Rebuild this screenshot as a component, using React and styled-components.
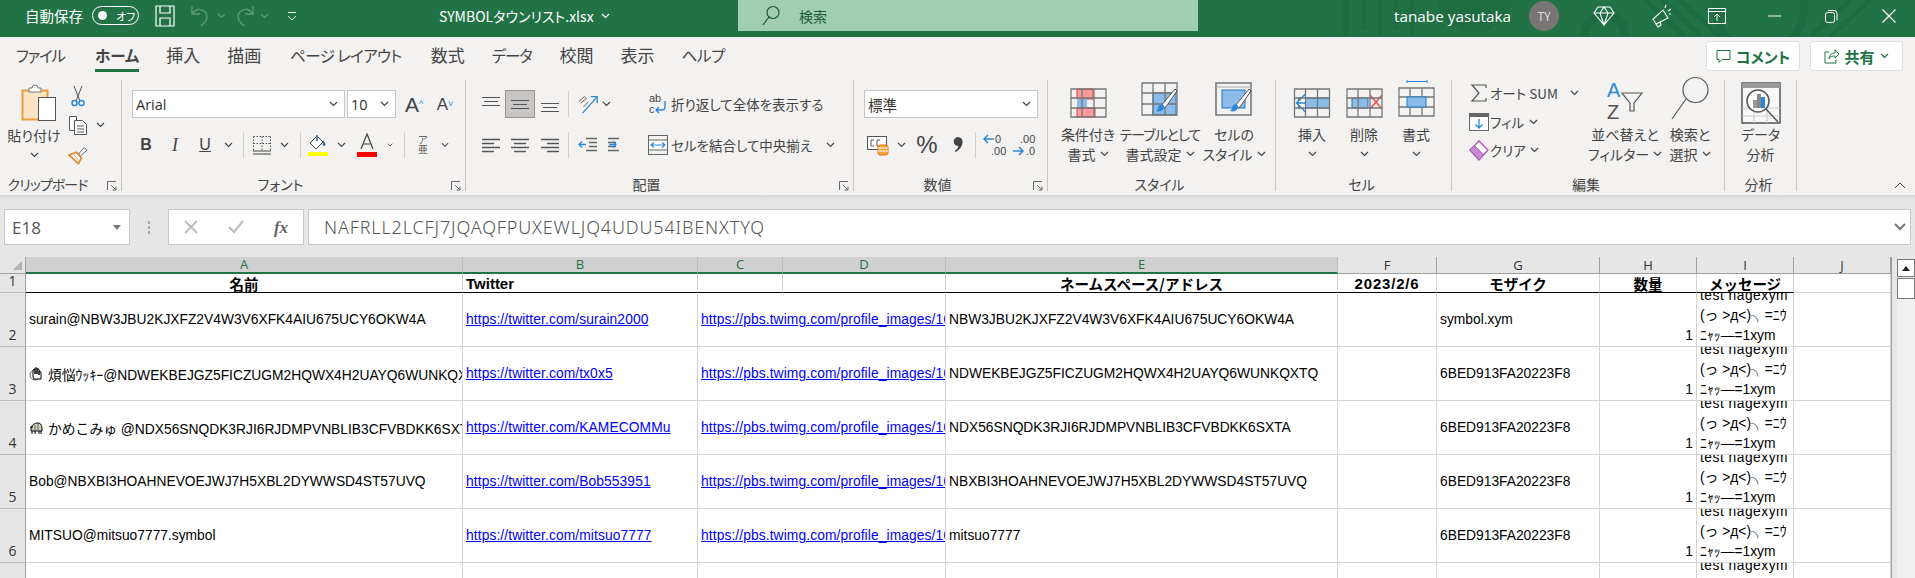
import React from 'react'
import styled, { createGlobalStyle } from 'styled-components'

const uiFont = '"Noto Sans CJK JP", "Noto Sans", sans-serif'
const gridFont = '"Liberation Sans", "Noto Sans CJK JP", sans-serif'

const Global = createGlobalStyle`
  html, body { margin: 0; padding: 0; height: 578px; overflow: hidden; background: #e6e6e6; }
  * { box-sizing: border-box; }
  #root { height: 578px; overflow: hidden; font-family: ${uiFont}; font-feature-settings: "palt"; color: #444; }
`

/* ---------- title bar ---------- */
const TitleBar = styled.header`
  position: relative;
  display: flex;
  height: 37px;
  background: #217346;
  color: #fff;
  overflow: hidden;
`
const Pattern = styled.svg`
  position: absolute;
  right: 0;
  top: 0;
`
const TitleLeft = styled.div`
  position: relative;
  display: flex;
  align-items: center;
  width: 738px;
  height: 31px;
  padding-left: 25px;
  font-size: 14.5px;
`
const AutoSave = styled.span`
  width: 67px;
`
const Toggle = styled.span`
  display: flex;
  align-items: center;
  width: 47px;
  height: 19px;
  margin-right: 16px;
  padding-left: 5px;
  gap: 9px;
  border: 1px solid #fff;
  border-radius: 10px;
  font-size: 11px;
  &::before {
    content: '';
    width: 9px;
    height: 9px;
    border-radius: 50%;
    background: #fff;
  }
`
const Slot = styled.span`
  display: inline-flex;
  flex: none;
  align-items: center;
  justify-content: center;
  width: ${p => p.$w}px;
  margin-left: ${p => p.$ml || 0}px;
  height: 100%;
  ${p => p.$active ? 'background: #c8c6c4; border: 1px solid #979593;' : ''}
`
const FileName = styled.span`
  display: flex;
  align-items: center;
  gap: 7px;
  margin-left: 142px;
  font-size: 14px;
`
const SearchBox = styled.div`
  position: relative;
  display: flex;
  align-items: center;
  width: 460px;
  height: 31px;
  padding-left: 24px;
  gap: 19px;
  background: #a0cdb3;
  color: #1c5a37;
  font-size: 14px;
`
const TitleRight = styled.div`
  position: relative;
  display: flex;
  align-items: center;
  flex: 1;
  height: 31px;
  padding-left: 196px;
`
const UserName = styled.span`
  width: 135px;
  font-size: 15.3px;
  font-family: "Open Sans", sans-serif;
  white-space: nowrap;
`
const Avatar = styled.span`
  display: flex;
  align-items: center;
  justify-content: center;
  width: 30px;
  height: 30px;
  margin-right: 20px;
  border-radius: 50%;
  background: #7a7574;
  color: #ddd;
  font-size: 12px;
`

/* ---------- tabs ---------- */
const TabRow = styled.nav`
  display: flex;
  align-items: flex-start;
  height: 41px;
  padding-left: 16px;
  background: #f3f2f1;
`
const Tab = styled.span`
  height: 35px;
  margin-right: ${p => p.$gap}px;
  padding-top: 6px;
  font-size: ${p => p.$kanji ? 17 : 15.5}px;
  letter-spacing: ${p => p.$ls || 0}px;
  line-height: 24px;
  white-space: nowrap;
  ${p => p.$active ? 'font-weight: 700; border-bottom: 3px solid #217346;' : ''}
`
const TopActions = styled.div`
  display: flex;
  gap: 10px;
  margin-left: auto;
  padding: 4px 12px 0 0;
`
const TopButton = styled.button`
  display: flex;
  align-items: center;
  justify-content: center;
  gap: 5px;
  width: ${p => p.$w}px;
  height: 30px;
  padding: 0;
  background: #fff;
  border: 1px solid #e1dfdd;
  border-radius: 3px;
  color: #217346;
  font: 700 15px ${uiFont};
  font-feature-settings: "palt";
`

/* ---------- ribbon ---------- */
const Ribbon = styled.section`
  display: flex;
  height: 117px;
  padding: 2px 0 4px;
  background: #f3f2f1;
`
const Group = styled.div`
  display: flex;
  flex-direction: column;
  flex: none;
  width: ${p => p.$w}px;
  border-right: 1px solid #c8c6c4;
`
const GroupBody = styled.div`
  display: flex;
  flex: 1;
  padding: ${p => p.$pt ?? 8}px 0 0 ${p => p.$pl || 0}px;
`
const GroupLabel = styled.div`
  display: grid;
  grid-template-columns: 1fr auto;
  align-items: start;
  height: 24px;
  padding: 8px 4px 0 0;
  font-size: 14px;
  line-height: 18px;
  letter-spacing: ${p => p.$ls || 0}px;
  & > span { text-align: center; }
  & > svg { margin: 6px 0 0 12px; }
`
const Column = styled.div`
  display: flex;
  flex-direction: column;
  flex: none;
  width: ${p => p.$w}px;
  ${p => p.$pl ? `padding-left: ${p.$pl}px;` : ''}
`
const Big = styled.div`
  display: flex;
  flex-direction: column;
  align-items: center;
  flex: none;
  width: ${p => p.$w}px;
  font-size: 14px;
  line-height: 20px;
  white-space: nowrap;
`
const BigIcon = styled.div`
  display: flex;
  align-items: flex-end;
  justify-content: center;
  height: ${p => p.$h || 30}px;
  margin-bottom: ${p => p.$mb ?? 6}px;
  margin-left: ${p => p.$ml || 0}px;
`
const TextLine = styled.span`
  display: flex;
  align-items: center;
  justify-content: center;
  gap: 4px;
  height: 20px;
  letter-spacing: ${p => p.$ls || 0}px;
`
const ToolRow = styled.div`
  display: flex;
  align-items: center;
  height: ${p => p.$h}px;
  margin-top: ${p => p.$mt || 0}px;
  font-size: 13.5px;
  white-space: nowrap;
`
const Divider = styled.span`
  flex: none;
  width: 1px;
  height: 26px;
  margin: 0 ${p => p.$mr || 0}px 0 ${p => p.$ml || 0}px;
  background: #d2d0ce;
`
const SelectBox = styled.div`
  display: flex;
  align-items: center;
  justify-content: space-between;
  flex: none;
  width: ${p => p.$w}px;
  height: 28px;
  margin-right: ${p => p.$mr || 0}px;
  padding: 0 6px 0 3px;
  background: #fff;
  border: 1px solid #c8c6c4;
  color: #333;
  font-size: 14.5px;
  font-family: ${p => p.$arial ? '"Open Sans", sans-serif' : uiFont};
`
const Glyph = styled.span`
  color: ${p => p.$color || '#444'};
  font-family: ${p => p.$serif ? '"Liberation Serif", serif' : '"Liberation Sans", sans-serif'};
  font-size: ${p => p.$size || 16}px;
  font-weight: ${p => p.$bold ? 700 : 400};
  font-style: ${p => p.$italic ? 'italic' : 'normal'};
  text-decoration: ${p => p.$under ? 'underline' : 'none'};
  line-height: 1;
`
const Spacer = styled.div`
  display: flex;
  flex: 1;
  align-items: flex-end;
  justify-content: flex-end;
  padding: 0 9px 2px 0;
`

/* ---------- formula bar ---------- */
const FormulaBar = styled.div`
  display: flex;
  height: 62px;
  padding: 14px 4px 12px;
  background: linear-gradient(#d6d6d6, #e6e6e6 6px);
`
const NameBox = styled.div`
  display: flex;
  align-items: center;
  justify-content: space-between;
  width: 126px;
  padding: 0 8px 0 7px;
  background: #fff;
  border: 1px solid #c8c8c8;
  font: 17px "Open Sans", sans-serif;
  color: #555;
`
const Grip = styled.span`
  display: flex;
  flex-direction: column;
  align-items: center;
  justify-content: center;
  gap: 2px;
  width: 38px;
  & > i { width: 2px; height: 3px; background: #aaa; }
`
const FxBox = styled.div`
  display: flex;
  align-items: center;
  width: 136px;
  margin-right: 4px;
  padding-left: 0;
  background: #fff;
  border: 1px solid #c8c8c8;
`
const FormulaInput = styled.div`
  display: flex;
  align-items: center;
  justify-content: space-between;
  flex: 1;
  padding: 0 4px 0 15px;
  background: #fff;
  border: 1px solid #c8c8c8;
  color: #555;
  font: 300 18px "Noto Sans", sans-serif;
  letter-spacing: .85px;
`

/* ---------- sheet ---------- */
const SheetArea = styled.div`
  display: flex;
  height: 321px;
  background: #e6e6e6;
  overflow: hidden;
`
const Grid = styled.div`
  display: grid;
  flex: none;
  grid-template-columns: 26px 437px 235px 85px 163px 392px 99px 163px 97px 97px 97px;
  grid-template-rows: 17px 19px repeat(6, 54px);
  width: 1892px;
  border-right: 1px solid #9f9f9f;
  font: 13.8px ${gridFont};
  font-feature-settings: normal;
  color: #000;
`
const Corner = styled.div`
  position: relative;
  background: #e6e6e6;
  border-right: 1px solid #9f9f9f;
  border-bottom: 1px solid #9f9f9f;
  &::after {
    content: '';
    position: absolute;
    right: 3px;
    bottom: 3px;
    border-style: solid;
    border-width: 0 0 9px 9px;
    border-color: transparent transparent #b4b4b4 transparent;
  }
`
const ColHead = styled.div`
  display: flex;
  align-items: center;
  justify-content: center;
  background: ${p => p.$on ? '#d0d0d0' : '#e6e6e6'};
  border-right: 1px solid ${p => p.$on ? '#bdbdbd' : '#9f9f9f'};
  border-bottom: ${p => p.$on ? '2px solid #217346' : '1px solid #9f9f9f'};
  color: ${p => p.$on ? '#217346' : '#333'};
  font: 13px/15px "Open Sans", sans-serif;
`
const RowHead = styled.div`
  display: flex;
  align-items: flex-end;
  justify-content: center;
  padding-bottom: 2px;
  background: #e6e6e6;
  border-right: 1px solid #9f9f9f;
  border-bottom: 1px solid #bdbdbd;
  color: #333;
  font: 14px/18px "Open Sans", sans-serif;
`
const Cell = styled.div`
  display: flex;
  align-items: ${p => p.$valign || 'center'};
  justify-content: ${p => p.$justify || 'flex-start'};
  grid-column: span ${p => p.$span || 1};
  min-width: 0;
  padding: 0 3px;
  background: #fff;
  border-right: 1px solid #d4d4d4;
  border-bottom: 1px solid #d4d4d4;
  white-space: nowrap;
  overflow: hidden;
`
const HeadCell = styled(Cell)`
  justify-content: ${p => p.$left ? 'flex-start' : 'center'};
  border-bottom: 1px solid ${p => p.$plain ? '#d4d4d4' : '#000'};
  font-size: ${p => p.$ja ? 14.5 : 15}px;
  font-weight: 700;
  line-height: 17px;
  letter-spacing: ${p => p.$wide ? .8 : 0}px;
  ${p => p.$ja ? `font-family: ${uiFont};` : ''}
`
const Link = styled.a`
  color: #00f;
  text-decoration: underline;
  letter-spacing: .1px;
`
const Lines = styled.div`
  flex: none;
  line-height: 20px;
`
const WideLine = styled.div`
  letter-spacing: .5px;
`
const Scrollbar = styled.div`
  display: flex;
  flex-direction: column;
  flex: none;
  width: 18px;
  margin: 2px 0 0 5px;
  background: #f0f0f0;
`
const ScrollButton = styled.div`
  display: flex;
  align-items: center;
  justify-content: center;
  height: 18px;
  background: #fff;
  border: 1px solid #777;
  &::before {
    content: '';
    border-style: solid;
    border-width: 0 4px 5px 4px;
    border-color: transparent transparent #222 transparent;
  }
`
const ScrollThumb = styled.div`
  height: 21px;
  margin-top: 1px;
  background: #fff;
  border: 1px solid #777;
`

/* ---------- icons ---------- */
const Chevron = ({ color = '#444' }) => (
  <svg width="9" height="6" viewBox="0 0 9 6"><path d="M1 1l3.5 3.5L8 1" fill="none" stroke={color} strokeWidth="1.2" /></svg>
)
const Launcher = () => (
  <svg width="10" height="10" viewBox="0 0 10 10" fill="none" stroke="#666"><path d="M.5 9V.5H9M4 4l5 5M9 5.500V9H5.500" /></svg>
)
const Line = ({ children, w = 20, h = 20 }) => (
  <svg width={w} height={h} viewBox={`0 0 ${w} ${h}`} fill="none" stroke="#555" strokeWidth="1">{children}</svg>
)
const AlignV = ({ pos }) => {
  const y = { top: 3, mid: 6, bot: 9 }[pos]
  return (
    <Line><path d={`M1 ${y}.5h18M3 ${y + 4}.5h14M1 ${y + 8}.5h18`} strokeWidth="1.2" /></Line>
  )
}
const AlignH = ({ pos }) => {
  const paths = {
    left: 'M1 2.500h18M1 6.500h12M1 10.500h18M1 14.500h12',
    center: 'M1 2.500h18M4 6.500h12M1 10.500h18M4 14.500h12',
    right: 'M1 2.500h18M7 6.500h12M1 10.500h18M7 14.500h12',
  }
  return <Line h={17}><path d={paths[pos]} strokeWidth="1.3" /></Line>
}
const Indent = ({ right }) => (
  <Line w={19} h={18}>
    <path d="M8 2.500h11M11 6.500h8M11 10.500h8M8 14.500h11" stroke="#666" transform={right ? 'matrix(-1 0 0 1 19 0)' : undefined} strokeWidth="1.3" />
    <path d={right ? 'M1 8.500h7M5 5.500l3 3-3 3' : 'M8 8.500H1M4 5.500l-3 3 3 3'} stroke="#2b88d8" strokeWidth="1.3" />
  </Line>
)
const PasteIcon = () => (
  <svg width="36" height="37" viewBox="0 0 36 37">
    <rect x="1.500" y="6.500" width="25" height="29" fill="#fbe3c3" stroke="#ed9b3f" strokeWidth="2" />
    <path d="M8 6V4h3a3 3 0 016 0h3v4H8z" fill="#fff" stroke="#777" />
    <rect x="17.500" y="13.500" width="17" height="23" fill="#fff" stroke="#555" />
  </svg>
)
const Scissors = () => (
  <svg width="14" height="22" viewBox="0 0 14 22" fill="none">
    <path d="M3 1l6 15M11 1L5 16" stroke="#555" />
    <circle cx="3.500" cy="18" r="2.500" stroke="#2b88d8" strokeWidth="1.5" />
    <circle cx="10.500" cy="18" r="2.500" stroke="#2b88d8" strokeWidth="1.5" />
  </svg>
)
const CopyIcon = () => (
  <svg width="20" height="20" viewBox="0 0 20 20" fill="#fff" stroke="#555">
    <path d="M1.500 1.500h7v14h-7z" />
    <path d="M6.500 5.500h8l4 4v10h-12z" />
    <path d="M9 11h7M9 14h7M9 17h7" />
  </svg>
)
const BrushIcon = () => (
  <svg width="21" height="20" viewBox="0 0 21 20">
    <path d="M1 10l8-3 5 6-3 6z" fill="#fff" stroke="#e8862a" strokeWidth="1.800" />
    <path d="M4 12l5 5M6 10l5 5" stroke="#e8862a" />
    <path d="M11 9l6-7 3 3-7 6z" fill="#f4f4f4" stroke="#666" />
  </svg>
)
const BordersIcon = () => (
  <Line h={21}>
    <path d="M1.500 1.500h17M1.500 1.500v14M18.500 1.500v14M10 1.500v14M1.500 8.500h17" strokeDasharray="1.500 1.500" />
    <path d="M1 16h18M1 19h18" stroke="#444" strokeWidth="1.2" />
  </Line>
)
const FillIcon = () => (
  <svg width="20" height="22" viewBox="0 0 20 22">
    <path d="M9 2L2 9l6 6 7-7z" fill="#fff" stroke="#444" />
    <path d="M9 1v6" stroke="#2b6cb0" strokeWidth="1.500" />
    <path d="M15 6c2 3 2.500 4 2.500 5a2 2 0 01-3 0z" fill="#2b6cb0" />
    <rect y="18" width="20" height="4" fill="#ff0" />
  </svg>
)
const FontColor = () => (
  <svg width="20" height="24" viewBox="0 0 20 24">
    <path d="M4 16L10 1l6 15M6 11h8" fill="none" stroke="#444" strokeWidth="1.200" />
    <rect y="19" width="20" height="5" fill="#f00" />
  </svg>
)
const OrientIcon = () => (
  <svg width="24" height="22" viewBox="0 0 24 22" fill="none">
    <path d="M5 21L20 4M14 3h7v7" stroke="#2b88d8" strokeWidth="1.400" />
    <path d="M1 8l6-5 2 2-6 5M6 14l5-5" stroke="#555" />
  </svg>
)
const WrapIcon = () => (
  <svg width="19" height="22" viewBox="0 0 19 22">
    <text x="1" y="9" fontSize="11" fill="#444" fontFamily="Liberation Sans">ab</text>
    <text x="1" y="20" fontSize="11" fill="#444" fontFamily="Liberation Sans">c</text>
    <path d="M17 8v6a3 3 0 01-3 3H8M11 14l-3 3 3 3" fill="none" stroke="#2b88d8" strokeWidth="1.400" />
  </svg>
)
const MergeIcon = () => (
  <svg width="20" height="20" viewBox="0 0 20 20" fill="none">
    <rect x=".5" y=".5" width="19" height="19" stroke="#666" />
    <path d="M1 5h18M1 15h18" stroke="#666" />
    <rect x="1" y="6" width="18" height="8" fill="#fff" />
    <path d="M3 10h14M6 7.500L3 10l3 2.500M14 7.500l3 2.500-3 2.500" stroke="#2b88d8" strokeWidth="1.200" />
  </svg>
)
const CurrencyIcon = () => (
  <svg width="22" height="22" viewBox="0 0 22 22">
    <rect x=".5" y="2.500" width="19" height="13" fill="#fff" stroke="#555" />
    <path d="M7 6H4v6h3M13 6h-3v6h3" fill="none" stroke="#555" />
    <rect x="11" y="11" width="10" height="10" rx="2" fill="#f2a13c" stroke="#e27a1a" />
    <path d="M11 14h10M11 17h10" stroke="#fff" />
  </svg>
)
const CommaIcon = () => (
  <svg width="10" height="16" viewBox="0 0 10 16"><path d="M5 0a4.500 4.500 0 014.500 5c0 4-3 8-7 10l-.7-.9C4 12.500 5.200 10.500 5.400 9A4.500 4.500 0 015 0z" fill="#444" /></svg>
)
const DecimalIcon = ({ more }) => (
  <svg width="24" height="24" viewBox="0 0 24 24">
    <text x={more ? 8 : 12} y="10" fontSize="11" fill="#444" fontFamily="Liberation Sans">{more ? '.00' : '0'}</text>
    <text x={more ? 14 : 8} y="22" fontSize="11" fill="#444" fontFamily="Liberation Sans">{more ? '.0' : '.00'}</text>
    <path d={more ? 'M1 18h9M7 14l4 4-4 4' : 'M11 6H2M5 2L1 6l4 4'} fill="none" stroke="#2b88d8" strokeWidth="1.500" />
  </svg>
)
const TableBase = ({ children, w = 37, h = 30 }) => (
  <svg width={w} height={h} viewBox="0 0 37 30" fill="none">
    {children}
    <path d="M1 1h35v28H1zM1 10h35M1 20h35M12 1v28M24 1v28" stroke="#777" strokeWidth="1.300" />
  </svg>
)
const CondIcon = () => (
  <TableBase>
    <rect x="7" y="1" width="16" height="10" fill="#ff9a9a" stroke="#e03c3c" />
    <rect x="7" y="11" width="10" height="9" fill="#8bbbe8" />
    <rect x="7" y="20" width="18" height="9" fill="#ff9a9a" stroke="#e03c3c" />
  </TableBase>
)
const Paint = () => (
  <>
    <path d="M20 24L34 7l2 2-12 17z" fill="#fff" stroke="#555" />
    <path d="M18 23c3-2 6 0 5 3s-5 4-8 3c2-1 2-4 3-6z" fill="#2b88d8" />
  </>
)
const TableFormatIcon = () => (
  <svg width="38" height="36" viewBox="0 0 38 36" fill="none">
    <rect x="12" y="11" width="23" height="22" fill="#8bbbe8" stroke="#1f77c4" />
    <path d="M1 1h35v32H1zM1 11h35M1 22h35M12 1v32M24 1v32" stroke="#777" strokeWidth="1.300" />
    <Paint />
  </svg>
)
const CellStyleIcon = () => (
  <svg width="38" height="36" viewBox="0 0 38 36" fill="none">
    <path d="M1 1h35v32H1z" stroke="#777" strokeWidth="1.600" />
    <path d="M1 5h35" stroke="#aaa" />
    <rect x="7" y="8" width="23" height="18" fill="#8bbbe8" stroke="#1f77c4" />
    <Paint />
  </svg>
)
const InsertIcon = () => (
  <TableBase w={38}>
    <rect x="5" y="10" width="31" height="10" fill="#8bbbe8" stroke="#1f77c4" />
    <path d="M12 6l-9 9 9 9M3 15h9" stroke="#2b88d8" strokeWidth="1.500" fill="#fff" />
  </TableBase>
)
const DeleteIcon = () => (
  <TableBase>
    <rect x="6" y="10" width="16" height="10" fill="#8bbbe8" stroke="#1f77c4" />
    <path d="M24 7l12 14M36 7L24 21" stroke="#f04b4b" strokeWidth="1.500" />
  </TableBase>
)
const FormatIcon = () => (
  <svg width="37" height="38" viewBox="0 0 37 38" fill="none">
    <path d="M9 1.500h20M9 0v3M29 0v3" stroke="#2b88d8" />
    <path d="M1 8h35v28H1zM1 17h35M1 27h35M12 8v28M24 8v28" stroke="#777" strokeWidth="1.300" />
    <rect x="9" y="17" width="19" height="10" fill="#8bbbe8" stroke="#1f77c4" />
  </svg>
)
const SigmaIcon = () => (
  <svg width="18" height="19" viewBox="0 0 18 19" fill="none"><path d="M16 4V1H2l7 8-7 8h14v-3" stroke="#555" strokeWidth="1.200" /></svg>
)
const FillDownIcon = () => (
  <svg width="20" height="18" viewBox="0 0 20 18" fill="none">
    <rect x=".5" y=".5" width="19" height="17" fill="#fff" stroke="#666" />
    <path d="M1 2.500h18" stroke="#666" strokeWidth="3" />
    <path d="M10 6v9M6.500 11.500L10 15l3.500-3.500" stroke="#2b88d8" strokeWidth="1.300" />
  </svg>
)
const EraserIcon = () => (
  <svg width="20" height="21" viewBox="0 0 20 21">
    <path d="M10 1l9 9-9 10-9-10z" fill="#fff" stroke="#a94fb5" strokeWidth="1.300" />
    <path d="M5.500 5.500l9 9.500L10 20l-9-10z" fill="#c78ccf" stroke="#a94fb5" />
  </svg>
)
const SortIcon = () => (
  <svg width="36" height="42" viewBox="0 0 36 42" fill="none">
    <text x="0" y="18" fontSize="20" fill="#2b88d8" fontFamily="Liberation Sans">A</text>
    <text x="0" y="40" fontSize="20" fill="#555" fontFamily="Liberation Sans">Z</text>
    <path d="M15 14h20l-8 10v8h-4v-8z" stroke="#555" strokeWidth="1.200" />
  </svg>
)
const FindIcon = () => (
  <svg width="38" height="45" viewBox="0 0 38 45" fill="none" stroke="#555" strokeWidth="1.200">
    <circle cx="24.500" cy="14" r="12.500" />
    <path d="M15 23L1 43" />
  </svg>
)
const AnalyzeIcon = () => (
  <svg width="40" height="42" viewBox="0 0 40 42" fill="none">
    <rect x="1" y="1" width="38" height="40" fill="#f8f8f8" stroke="#555" strokeWidth="1.500" />
    <rect x="1" y="1" width="38" height="5" fill="#999" />
    <path d="M1 26h38M1 34h38M13 26v15M26 26v15" stroke="#ccc" />
    <circle cx="17" cy="19" r="11" fill="#fff" stroke="#555" strokeWidth="1.500" />
    <path d="M25 27l12 13" stroke="#555" strokeWidth="1.500" />
    <rect x="12" y="18" width="4" height="8" fill="#999" />
    <rect x="16" y="12" width="4" height="14" fill="#888" />
    <rect x="20" y="15" width="4" height="11" fill="#2b88d8" />
  </svg>
)
const EmojiSvg = styled.svg`
  flex: none;
  margin-right: 4px;
`
const RowEmoji = ({ kind }) => (
  <EmojiSvg width="15" height="15" viewBox="0 0 15 15" fill="none">
    {kind === 'hand'
      ? <><circle cx="6" cy="9" r="5" stroke="#666" /><path d="M4 11V4l2-1v5-6l2 0v6-5l2 0v6-4l2 1v7H5z" fill="#fff" stroke="#000" /></>
      : <><path d="M2 9c0-4 4-6 7-6s4 3 4 6v2H2z" fill="#d9c89e" stroke="#000" /><path d="M3 11v3M6 11v3M10 11v3M12 11v3M1 7h3" stroke="#000" /><path d="M6 5v6M9 4v7" stroke="#3a7ab0" /></>}
  </EmojiSvg>
)

/* ---------- data ---------- */
const columns = ['A', 'B', 'C', 'D', 'E', 'F', 'G', 'H', 'I', 'J']
const twimg = 'https://pbs.twimg.com/profile_images/1620000000000000000/a.jpg'
const rows = [
  { n: 2, name: 'surain@NBW3JBU2KJXFZ2V4W3V6XFK4AIU675UCY6OKW4A', tw: 'surain2000', addr: 'NBW3JBU2KJXFZ2V4W3V6XFK4AIU675UCY6OKW4A', mosaic: 'symbol.xym' },
  { n: 3, icon: 'hand', name: '煩悩ｳｯｷｰ@NDWEKBEJGZ5FICZUGM2HQWX4H2UAYQ6WUNKQXTQ', tw: 'tx0x5', addr: 'NDWEKBEJGZ5FICZUGM2HQWX4H2UAYQ6WUNKQXTQ', mosaic: '6BED913FA20223F8' },
  { n: 4, icon: 'turtle', name: 'かめこみゅ @NDX56SNQDK3RJI6RJDMPVNBLIB3CFVBDKK6SXTA', tw: 'KAMECOMMu', addr: 'NDX56SNQDK3RJI6RJDMPVNBLIB3CFVBDKK6SXTA', mosaic: '6BED913FA20223F8' },
  { n: 5, name: 'Bob@NBXBI3HOAHNEVOEJWJ7H5XBL2DYWWSD4ST57UVQ', tw: 'Bob553951', addr: 'NBXBI3HOAHNEVOEJWJ7H5XBL2DYWWSD4ST57UVQ', mosaic: '6BED913FA20223F8' },
  { n: 6, name: 'MITSUO@mitsuo7777.symbol', tw: 'mitsuo7777', addr: 'mitsuo7777', mosaic: '6BED913FA20223F8' },
]

const Message = () => (
  <Lines>
    <WideLine>test nagexym</WideLine>
    <div>(っ &gt;д&lt;)╮=ﾆｳ</div>
    <div>ﾆｬｯ―=1xym</div>
  </Lines>
)

export default function App() {
  return (
    <>
      <Global />
      <TitleBar>
        <Pattern width="575" height="37" viewBox="0 0 575 37" fill="none" stroke="#000" strokeOpacity=".07">
          <path d="M6 0v37M24 0v30M40 0v37M56 0v30M72 0v37" strokeWidth="5" />
          <circle cx="135" cy="-5" r="38" fill="#000" fillOpacity=".06" stroke="none" />
          <circle cx="265" cy="35" r="20" strokeWidth="9" />
          <path d="M305 0l40 37M322 0l40 37M340 0l40 37M470 37L510 0M490 37L530 0" strokeWidth="5" />
          <circle cx="420" cy="8" r="44" strokeWidth="8" />
        </Pattern>
        <TitleLeft>
          <AutoSave>自動保存</AutoSave>
          <Toggle>オフ</Toggle>
          <Slot $w={20}>
            <svg width="20" height="22" viewBox="0 0 20 22" fill="none" stroke="#fff" strokeWidth="1.200">
              <path d="M1 1h18v20H1zM5 1v7h10V1M5 21v-8h10v8" />
            </svg>
          </Slot>
          <Slot $w={20} $ml={15}>
            <svg width="20" height="24" viewBox="0 0 20 24" fill="none" stroke="#5f9a78" strokeWidth="1.300"><path d="M2 2v8h8M2 10c3-5 8-6 12-3 4 3 4 8 0 12l-3 3" /></svg>
          </Slot>
          <Slot $w={11} $ml={6}><Chevron color="#5f9a78" /></Slot>
          <Slot $w={20} $ml={8}>
            <svg width="20" height="24" viewBox="0 0 20 24" fill="none" stroke="#5f9a78" strokeWidth="1.300"><path d="M18 2v8h-8M18 10c-3-5-8-6-12-3-4 3-4 8 0 12l3 3" /></svg>
          </Slot>
          <Slot $w={11} $ml={4}><Chevron color="#5f9a78" /></Slot>
          <Slot $w={10} $ml={17}>
            <svg width="10" height="10" viewBox="0 0 10 10" fill="none" stroke="#fff"><path d="M1 1.500h8M1 5l4 4 4-4" /></svg>
          </Slot>
          <FileName>
            SYMBOLタウンリスト.xlsx
            <Chevron color="#fff" />
          </FileName>
        </TitleLeft>
        <SearchBox>
          <svg width="18" height="21" viewBox="0 0 18 21" fill="none" stroke="#1c5a37" strokeWidth="1.200">
            <circle cx="11" cy="7.500" r="6" /><path d="M7 12l-6 8" />
          </svg>
          検索
        </SearchBox>
        <TitleRight>
          <UserName>tanabe yasutaka</UserName>
          <Avatar>TY</Avatar>
          <Slot $w={44} $ml={3}>
            <svg width="22" height="22" viewBox="0 0 22 22" fill="none" stroke="#fff" strokeWidth="1.100"><path d="M5 2h12l4 6-10 12L1 8zM1 8h20M7 8l4 12 4-12M7 8l4-6 4 6" /></svg>
          </Slot>
          <Slot $w={50} $ml={10}>
            <svg width="20" height="24" viewBox="0 0 20 24" fill="none" stroke="#fff" strokeWidth="1.100"><path d="M12 6l5 8-12 6-3-5zM5 20l2 3 3-2-1-3M14 4l1-3M17 7l3-2M18 10l2 0" /></svg>
          </Slot>
          <Slot $w={18} $ml={22}>
            <svg width="18" height="16" viewBox="0 0 18 16" fill="none" stroke="#fff"><path d="M.5 .5h17v15H.5zM.5 3.500h17M9 13V6M6 9l3-3 3 3" /></svg>
          </Slot>
          <Slot $w={13} $ml={42}>
            <svg width="13" height="2" viewBox="0 0 13 2"><path d="M0 1h13" stroke="#fff" /></svg>
          </Slot>
          <Slot $w={13} $ml={44}>
            <svg width="13" height="14" viewBox="0 0 13 14" fill="none" stroke="#fff"><rect x=".5" y="3.500" width="9" height="10" rx="2" /><path d="M3 1.500h6a3 3 0 013 3v7" /></svg>
          </Slot>
          <Slot $w={14} $ml={44}>
            <svg width="14" height="14" viewBox="0 0 14 14" stroke="#fff" strokeWidth="1.100"><path d="M.5 .5l13 13M13.500 .5l-13 13" /></svg>
          </Slot>
        </TitleRight>
      </TitleBar>

      <TabRow>
        <Tab $gap={30} $ls={-1.2}>ファイル</Tab>
        <Tab $gap={27} $active>ホーム</Tab>
        <Tab $gap={27} $kanji>挿入</Tab>
        <Tab $gap={29} $kanji>描画</Tab>
        <Tab $gap={29} $ls={-.6}>ページ レイアウト</Tab>
        <Tab $gap={27} $kanji>数式</Tab>
        <Tab $gap={28} $ls={-1.2}>データ</Tab>
        <Tab $gap={27} $kanji>校閲</Tab>
        <Tab $gap={27} $kanji>表示</Tab>
        <Tab $gap={0} $ls={-.3}>ヘルプ</Tab>
        <TopActions>
          <TopButton $w={94}>
            <svg width="15" height="15" viewBox="0 0 15 15" fill="none" stroke="#217346"><path d="M1 1.500h13v9H6l-3 3v-3H1z" /></svg>
            コメント
          </TopButton>
          <TopButton $w={93}>
            <svg width="15" height="15" viewBox="0 0 15 15" fill="none" stroke="#217346"><path d="M5 3H1v11h11v-3M5 10c0-4 3-6 6-6V1l4 4-4 4V7c-2 0-5 0-6 3z" /></svg>
            共有
            <Chevron color="#217346" />
          </TopButton>
        </TopActions>
      </TabRow>

      <Ribbon>
        <Group $w={122}>
          <GroupBody $pt={5}>
            <Big $w={68}>
              <BigIcon $h={36} $mb={4} $ml={10}><PasteIcon /></BigIcon>
              <TextLine>貼り付け</TextLine>
              <TextLine><Chevron /></TextLine>
            </Big>
            <Column $w={40}>
              <ToolRow $h={22}><Slot $w={20}><Scissors /></Slot></ToolRow>
              <ToolRow $h={20} $mt={8}><Slot $w={20}><CopyIcon /></Slot><Slot $w={12} $ml={6}><Chevron /></Slot></ToolRow>
              <ToolRow $h={20} $mt={10}><Slot $w={20}><BrushIcon /></Slot></ToolRow>
            </Column>
          </GroupBody>
          <GroupLabel $ls={-.9}><span>クリップボード</span><Launcher /></GroupLabel>
        </Group>

        <Group $w={344}>
          <GroupBody $pt={10} $pl={10}>
            <Column $w={334}>
              <ToolRow $h={28}>
                <SelectBox $w={213} $mr={2} $arial>Arial<Chevron /></SelectBox>
                <SelectBox $w={49} $arial>10<Chevron /></SelectBox>
                <Slot $w={36}><Glyph $size={21}>A</Glyph><Glyph $size={9} $color="#2b88d8">^</Glyph></Slot>
                <Slot $w={26}><Glyph $size={17}>A</Glyph><Glyph $size={9} $color="#2b88d8">˅</Glyph></Slot>
              </ToolRow>
              <ToolRow $h={26} $mt={14}>
                <Slot $w={28}><Glyph $bold $size={16}>B</Glyph></Slot>
                <Slot $w={30}><Glyph $italic $serif $size={18}>I</Glyph></Slot>
                <Slot $w={30}><Glyph $under $size={16}>U</Glyph></Slot>
                <Slot $w={16}><Chevron /></Slot>
                <Divider $ml={7} />
                <Slot $w={36}><BordersIcon /></Slot>
                <Slot $w={9}><Chevron /></Slot>
                <Divider $ml={11} />
                <Slot $w={34}><FillIcon /></Slot>
                <Slot $w={12}><Chevron /></Slot>
                <Slot $w={40}><FontColor /></Slot>
                <Slot $w={6}><Chevron /></Slot>
                <Divider $ml={11} />
                <Slot $w={36}><Glyph $size={10}>ア<br />亜</Glyph></Slot>
                <Slot $w={8}><Chevron /></Slot>
              </ToolRow>
            </Column>
          </GroupBody>
          <GroupLabel><span>フォント</span><Launcher /></GroupLabel>
        </Group>

        <Group $w={388}>
          <GroupBody $pt={10}>
            <Column $w={178} $pl={11}>
              <ToolRow $h={28}>
                <Slot $w={28}><AlignV pos="top" /></Slot>
                <Slot $w={30} $active><AlignV pos="mid" /></Slot>
                <Slot $w={30}><AlignV pos="bot" /></Slot>
                <Divider $ml={3} $mr={9} />
                <Slot $w={22}><OrientIcon /></Slot>
                <Slot $w={12}><Chevron /></Slot>
              </ToolRow>
              <ToolRow $h={26} $mt={14}>
                <Slot $w={28}><AlignH pos="left" /></Slot>
                <Slot $w={30}><AlignH pos="center" /></Slot>
                <Slot $w={30}><AlignH pos="right" /></Slot>
                <Divider $ml={3} $mr={9} />
                <Slot $w={19}><Indent /></Slot>
                <Slot $w={19} $ml={11}><Indent right /></Slot>
              </ToolRow>
            </Column>
            <Column $w={200}>
              <ToolRow $h={28}><Slot $w={27}><WrapIcon /></Slot>折り返して全体を表示する</ToolRow>
              <ToolRow $h={26} $mt={14}><Slot $w={27}><MergeIcon /></Slot>セルを結合して中央揃え<Slot $w={12} $ml={12}><Chevron /></Slot></ToolRow>
            </Column>
          </GroupBody>
          <GroupLabel><span>配置</span><Launcher /></GroupLabel>
        </Group>

        <Group $w={194}>
          <GroupBody $pt={10} $pl={10}>
            <Column $w={180}>
              <ToolRow $h={28}><SelectBox $w={174}>標準<Chevron /></SelectBox></ToolRow>
              <ToolRow $h={26} $mt={14}>
                <Slot $w={22} $ml={3}><CurrencyIcon /></Slot>
                <Slot $w={24}><Chevron /></Slot>
                <Slot $w={28}><Glyph $size={24}>%</Glyph></Slot>
                <Slot $w={34}><CommaIcon /></Slot>
                <Divider />
                <Slot $w={24} $ml={7}><DecimalIcon /></Slot>
                <Slot $w={24} $ml={5}><DecimalIcon more /></Slot>
              </ToolRow>
            </Column>
          </GroupBody>
          <GroupLabel><span>数値</span><Launcher /></GroupLabel>
        </Group>

        <Group $w={228}>
          <GroupBody $pl={2}>
            <Big $w={76}>
              <BigIcon><CondIcon /></BigIcon>
              <TextLine>条件付き</TextLine>
              <TextLine>書式 <Chevron /></TextLine>
            </Big>
            <Big $w={68}>
              <BigIcon><TableFormatIcon /></BigIcon>
              <TextLine $ls={-1}>テーブルとして</TextLine>
              <TextLine>書式設定 <Chevron /></TextLine>
            </Big>
            <Big $w={80}>
              <BigIcon><CellStyleIcon /></BigIcon>
              <TextLine>セルの</TextLine>
              <TextLine>スタイル <Chevron /></TextLine>
            </Big>
          </GroupBody>
          <GroupLabel><span>スタイル</span></GroupLabel>
        </Group>

        <Group $w={176}>
          <GroupBody $pl={10}>
            <Big $w={52}>
              <BigIcon><InsertIcon /></BigIcon>
              <TextLine>挿入</TextLine>
              <TextLine><Chevron /></TextLine>
            </Big>
            <Big $w={52}>
              <BigIcon><DeleteIcon /></BigIcon>
              <TextLine>削除</TextLine>
              <TextLine><Chevron /></TextLine>
            </Big>
            <Big $w={52}>
              <BigIcon><FormatIcon /></BigIcon>
              <TextLine>書式</TextLine>
              <TextLine><Chevron /></TextLine>
            </Big>
          </GroupBody>
          <GroupLabel><span>セル</span></GroupLabel>
        </Group>

        <Group $w={273}>
          <GroupBody $pt={1}>
            <Column $w={139} $pl={15}>
              <ToolRow $h={24}><Slot $w={23}><SigmaIcon /></Slot>オート SUM<Slot $w={12} $ml={11}><Chevron /></Slot></ToolRow>
              <ToolRow $h={26} $mt={4}><Slot $w={23}><FillDownIcon /></Slot>フィル<Slot $w={12} $ml={3}><Chevron /></Slot></ToolRow>
              <ToolRow $h={26} $mt={2}><Slot $w={23}><EraserIcon /></Slot>クリア<Slot $w={12} $ml={3}><Chevron /></Slot></ToolRow>
            </Column>
            <Big $w={68}>
              <BigIcon $h={40} $mb={3}><SortIcon /></BigIcon>
              <TextLine>並べ替えと</TextLine>
              <TextLine>フィルター <Chevron /></TextLine>
            </Big>
            <Big $w={62}>
              <BigIcon $h={40} $mb={3}><FindIcon /></BigIcon>
              <TextLine>検索と</TextLine>
              <TextLine>選択 <Chevron /></TextLine>
            </Big>
          </GroupBody>
          <GroupLabel><span>編集</span></GroupLabel>
        </Group>

        <Group $w={72}>
          <GroupBody $pt={2}>
            <Big $w={71}>
              <BigIcon $h={42} $mb={0}><AnalyzeIcon /></BigIcon>
              <TextLine>データ</TextLine>
              <TextLine>分析</TextLine>
            </Big>
          </GroupBody>
          <GroupLabel><span>分析</span></GroupLabel>
        </Group>

        <Spacer>
          <svg width="12" height="7" viewBox="0 0 12 7"><path d="M1 6l5-5 5 5" fill="none" stroke="#444" /></svg>
        </Spacer>
      </Ribbon>

      <FormulaBar>
        <NameBox>
          E18
          <svg width="8" height="5" viewBox="0 0 8 5"><path d="M0 0h8L4 5z" fill="#777" /></svg>
        </NameBox>
        <Grip><i /><i /><i /></Grip>
        <FxBox>
          <Slot $w={44}>
            <svg width="14" height="14" viewBox="0 0 14 14" stroke="#bbb" strokeWidth="1.800"><path d="M1 1l12 12M13 1L1 13" /></svg>
          </Slot>
          <Slot $w={46}>
            <svg width="16" height="14" viewBox="0 0 16 14" fill="none" stroke="#bbb" strokeWidth="2"><path d="M1 7l5 5 9-11" /></svg>
          </Slot>
          <Slot $w={44}><Glyph $serif $italic $bold $size={17} $color="#666">fx</Glyph></Slot>
        </FxBox>
        <FormulaInput>
          NAFRLL2LCFJ7JQAQFPUXEWLJQ4UDU54IBENXTYQ
          <svg width="12" height="8" viewBox="0 0 12 8"><path d="M1 1l5 5 5-5" fill="none" stroke="#777" strokeWidth="2" /></svg>
        </FormulaInput>
      </FormulaBar>

      <SheetArea>
        <Grid>
          <Corner />
          {columns.map((c, i) => <ColHead key={c} $on={i < 5}>{c}</ColHead>)}

          <RowHead>1</RowHead>
          <HeadCell $ja>名前</HeadCell>
          <HeadCell $left>Twitter</HeadCell>
          <HeadCell />
          <HeadCell />
          <HeadCell $ja>ネームスペース/アドレス</HeadCell>
          <HeadCell $wide>2023/2/6</HeadCell>
          <HeadCell $ja>モザイク</HeadCell>
          <HeadCell $ja>数量</HeadCell>
          <HeadCell $ja>メッセージ</HeadCell>
          <HeadCell $plain />

          {rows.map(r => (
            <React.Fragment key={r.n}>
              <RowHead>{r.n}</RowHead>
              <Cell>
                {r.icon && <RowEmoji kind={r.icon} />}
                {r.name}
              </Cell>
              <Cell><Link href="#">https://twitter.com/{r.tw}</Link></Cell>
              <Cell $span={2}><Link href="#">{twimg}</Link></Cell>
              <Cell>{r.addr}</Cell>
              <Cell />
              <Cell>{r.mosaic}</Cell>
              <Cell $valign="flex-end" $justify="flex-end"><Lines>1</Lines></Cell>
              <Cell $valign="flex-end"><Message /></Cell>
              <Cell />
            </React.Fragment>
          ))}

          <RowHead />
          <Cell />
          <Cell />
          <Cell $span={2} />
          <Cell />
          <Cell />
          <Cell />
          <Cell />
          <Cell $valign="flex-end"><Message /></Cell>
          <Cell />
        </Grid>
        <Scrollbar>
          <ScrollButton />
          <ScrollThumb />
        </Scrollbar>
      </SheetArea>
    </>
  )
}
